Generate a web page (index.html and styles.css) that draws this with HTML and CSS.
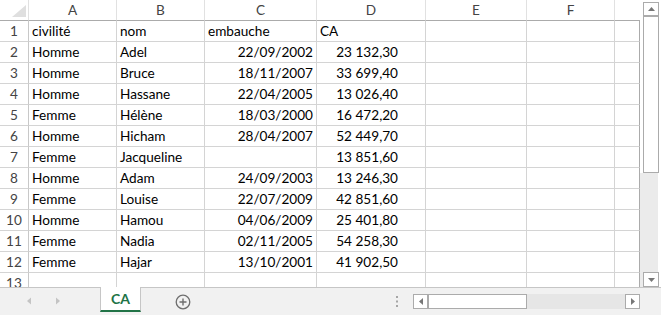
FILE: index.html
```
<!DOCTYPE html>
<html lang="fr">
<head>
  <meta charset="UTF-8" />
  <title>CA</title>
  <link rel="stylesheet" href="styles.css">
</head>
<body>
  <div class="sheet">
    <div class="main">
      <div class="grid">
        <div class="ch corner"><svg width="28" height="20"><polygon points="26,5 26,17 12,17" fill="#dfdfdf"/></svg></div>
        <div class="ch">A</div><div class="ch">B</div><div class="ch">C</div><div class="ch">D</div><div class="ch">E</div><div class="ch">F</div><div class="ch g"></div>

        <div class="rh">1</div><div>civilité</div><div>nom</div><div>embauche</div><div>CA</div><div></div><div></div><div class="g"></div>
        <div class="rh">2</div><div>Homme</div><div>Adel</div><div class="r">22/09/2002</div><div class="n">23 132,30</div><div></div><div></div><div class="g"></div>
        <div class="rh">3</div><div>Homme</div><div>Bruce</div><div class="r">18/11/2007</div><div class="n">33 699,40</div><div></div><div></div><div class="g"></div>
        <div class="rh">4</div><div>Homme</div><div>Hassane</div><div class="r">22/04/2005</div><div class="n">13 026,40</div><div></div><div></div><div class="g"></div>
        <div class="rh">5</div><div>Femme</div><div>Hélène</div><div class="r">18/03/2000</div><div class="n">16 472,20</div><div></div><div></div><div class="g"></div>
        <div class="rh">6</div><div>Homme</div><div>Hicham</div><div class="r">28/04/2007</div><div class="n">52 449,70</div><div></div><div></div><div class="g"></div>
        <div class="rh">7</div><div>Femme</div><div>Jacqueline</div><div class="r"></div><div class="n">13 851,60</div><div></div><div></div><div class="g"></div>
        <div class="rh">8</div><div>Homme</div><div>Adam</div><div class="r">24/09/2003</div><div class="n">13 246,30</div><div></div><div></div><div class="g"></div>
        <div class="rh">9</div><div>Femme</div><div>Louise</div><div class="r">22/07/2009</div><div class="n">42 851,60</div><div></div><div></div><div class="g"></div>
        <div class="rh">10</div><div>Homme</div><div>Hamou</div><div class="r">04/06/2009</div><div class="n">25 401,80</div><div></div><div></div><div class="g"></div>
        <div class="rh">11</div><div>Femme</div><div>Nadia</div><div class="r">02/11/2005</div><div class="n">54 258,30</div><div></div><div></div><div class="g"></div>
        <div class="rh">12</div><div>Femme</div><div>Hajar</div><div class="r">13/10/2001</div><div class="n">41 902,50</div><div></div><div></div><div class="g"></div>
        <div class="rh last">13</div><div class="last"></div><div class="last"></div><div class="last"></div><div class="last"></div><div class="last"></div><div class="last"></div><div class="g last"></div>
      </div>

      <div class="vscroll">
        <div class="vbtn up"><svg width="7" height="4"><polygon points="0,4 7,4 3.5,0" fill="#777"/></svg></div>
        <div class="thumb"></div>
        <div class="vtrack">
          <div class="vbtn down"><svg width="7" height="4"><polygon points="0,0 7,0 3.5,4" fill="#777"/></svg></div>
        </div>
      </div>
    </div>

    <div class="tabbar">
      <svg class="nav" width="100" height="27">
        <polygon points="31,9.5 31,16.5 27,13" fill="#c4c4c4"/>
        <polygon points="56,9.5 56,16.5 60,13" fill="#c4c4c4"/>
      </svg>
      <div class="tab">CA</div>
      <svg class="add" width="16" height="16" viewBox="0 0 16 16">
        <circle cx="8" cy="8" r="6.8" fill="none" stroke="#6e6e6e" stroke-width="1.3"/>
        <path d="M8 4.5v7M4.5 8h7" stroke="#6e6e6e" stroke-width="1.4"/>
      </svg>
      <svg class="dots" width="2" height="11">
        <rect x="0" y="0" width="2" height="2" fill="#a6a6a6"/>
        <rect x="0" y="4.5" width="2" height="2" fill="#a6a6a6"/>
        <rect x="0" y="9" width="2" height="2" fill="#a6a6a6"/>
      </svg>
      <div class="hscroll">
        <div class="hbtn"><svg width="4" height="7"><polygon points="4,0 4,7 0,3.5" fill="#777"/></svg></div>
        <div class="hthumb"></div>
        <div class="htrack"></div>
        <div class="hbtn"><svg width="4" height="7"><polygon points="0,0 0,7 4,3.5" fill="#777"/></svg></div>
      </div>
    </div>
  </div>
</body>
</html>
```
FILE: styles.css
```
* { box-sizing: border-box; margin:0; padding:0; }
body { width:661px; height:315px; overflow:hidden; background:#fff; font-family:Lato,'Liberation Sans',sans-serif; font-size:13.6px; color:#000; }

.sheet { display:flex; flex-direction:column; }
.main { display:flex; height:287px; }

/* —— cells —— */
.grid { display:grid; width:640px; grid-template-columns:29px 88px 88px 112px 109px 101px 88px 25px; grid-template-rows:repeat(13,21px) 14px; }
.grid div { border-right:1px solid #d4d4d4; border-bottom:1px solid #d4d4d4; padding:0 3px; line-height:20px; white-space:nowrap; overflow:hidden; }
.grid .ch { border-bottom-color:#ababab; border-right-color:#e1e1e1; text-align:center; color:#444; }
.grid .ch.g { border-right:none; }
.grid .corner { padding:0; }
.grid .corner svg { display:block; }
.grid .rh { padding:0; text-align:center; color:#444; border-right-color:#c8c8c8; }
.grid .r { text-align:right; }
.grid .n { text-align:right; padding-right:27px; }
.grid .g { border-right-color:#ababab; }
.grid .last { border-bottom:none; }

/* —— vertical scrollbar —— */
.vscroll { width:21px; display:flex; flex-direction:column; background:#fff; }
.vbtn { width:16px; height:15px; margin-left:3px; border:1px solid #ababab; background:#fff; display:flex; align-items:center; justify-content:center; }
.vbtn svg { display:block; }
.vscroll .up { margin-top:2px; border-bottom-width:2px; }
.thumb { width:16px; height:156px; margin-left:3px; border:1px solid #ababab; border-top:none; background:#fff; }
.vtrack { flex:1; width:18px; background:#ebebeb; display:flex; flex-direction:column; justify-content:flex-end; }
.vscroll .down { height:15px; margin-bottom:0; }

/* —— sheet tabs —— */
.tabbar { height:28px; border-top:1px solid #c6c6c6; background:#f1f1f1; display:flex; align-items:flex-start; }
.nav { display:block; flex:none; }
.tab { width:41px; height:25px; margin-top:-1px; background:#fff; border-left:1px solid #c6c6c6; border-right:1px solid #c6c6c6; border-bottom:2px solid #217346; color:#217346; font-weight:bold; font-size:14px; text-align:center; line-height:23px; }
.add { display:block; margin-left:34px; align-self:center; }
.dots { display:block; margin-left:205px; align-self:center; }

/* —— horizontal scrollbar —— */
.hscroll { display:flex; height:15px; margin-left:15px; margin-top:6px; }
.hbtn { width:15px; height:15px; border:1px solid #ababab; background:#fff; display:flex; align-items:center; justify-content:center; }
.hbtn svg { display:block; }
.hthumb { width:99px; border:1px solid #ababab; background:#fff; }
.htrack { width:98px; background:#e6e6e6; }
```
